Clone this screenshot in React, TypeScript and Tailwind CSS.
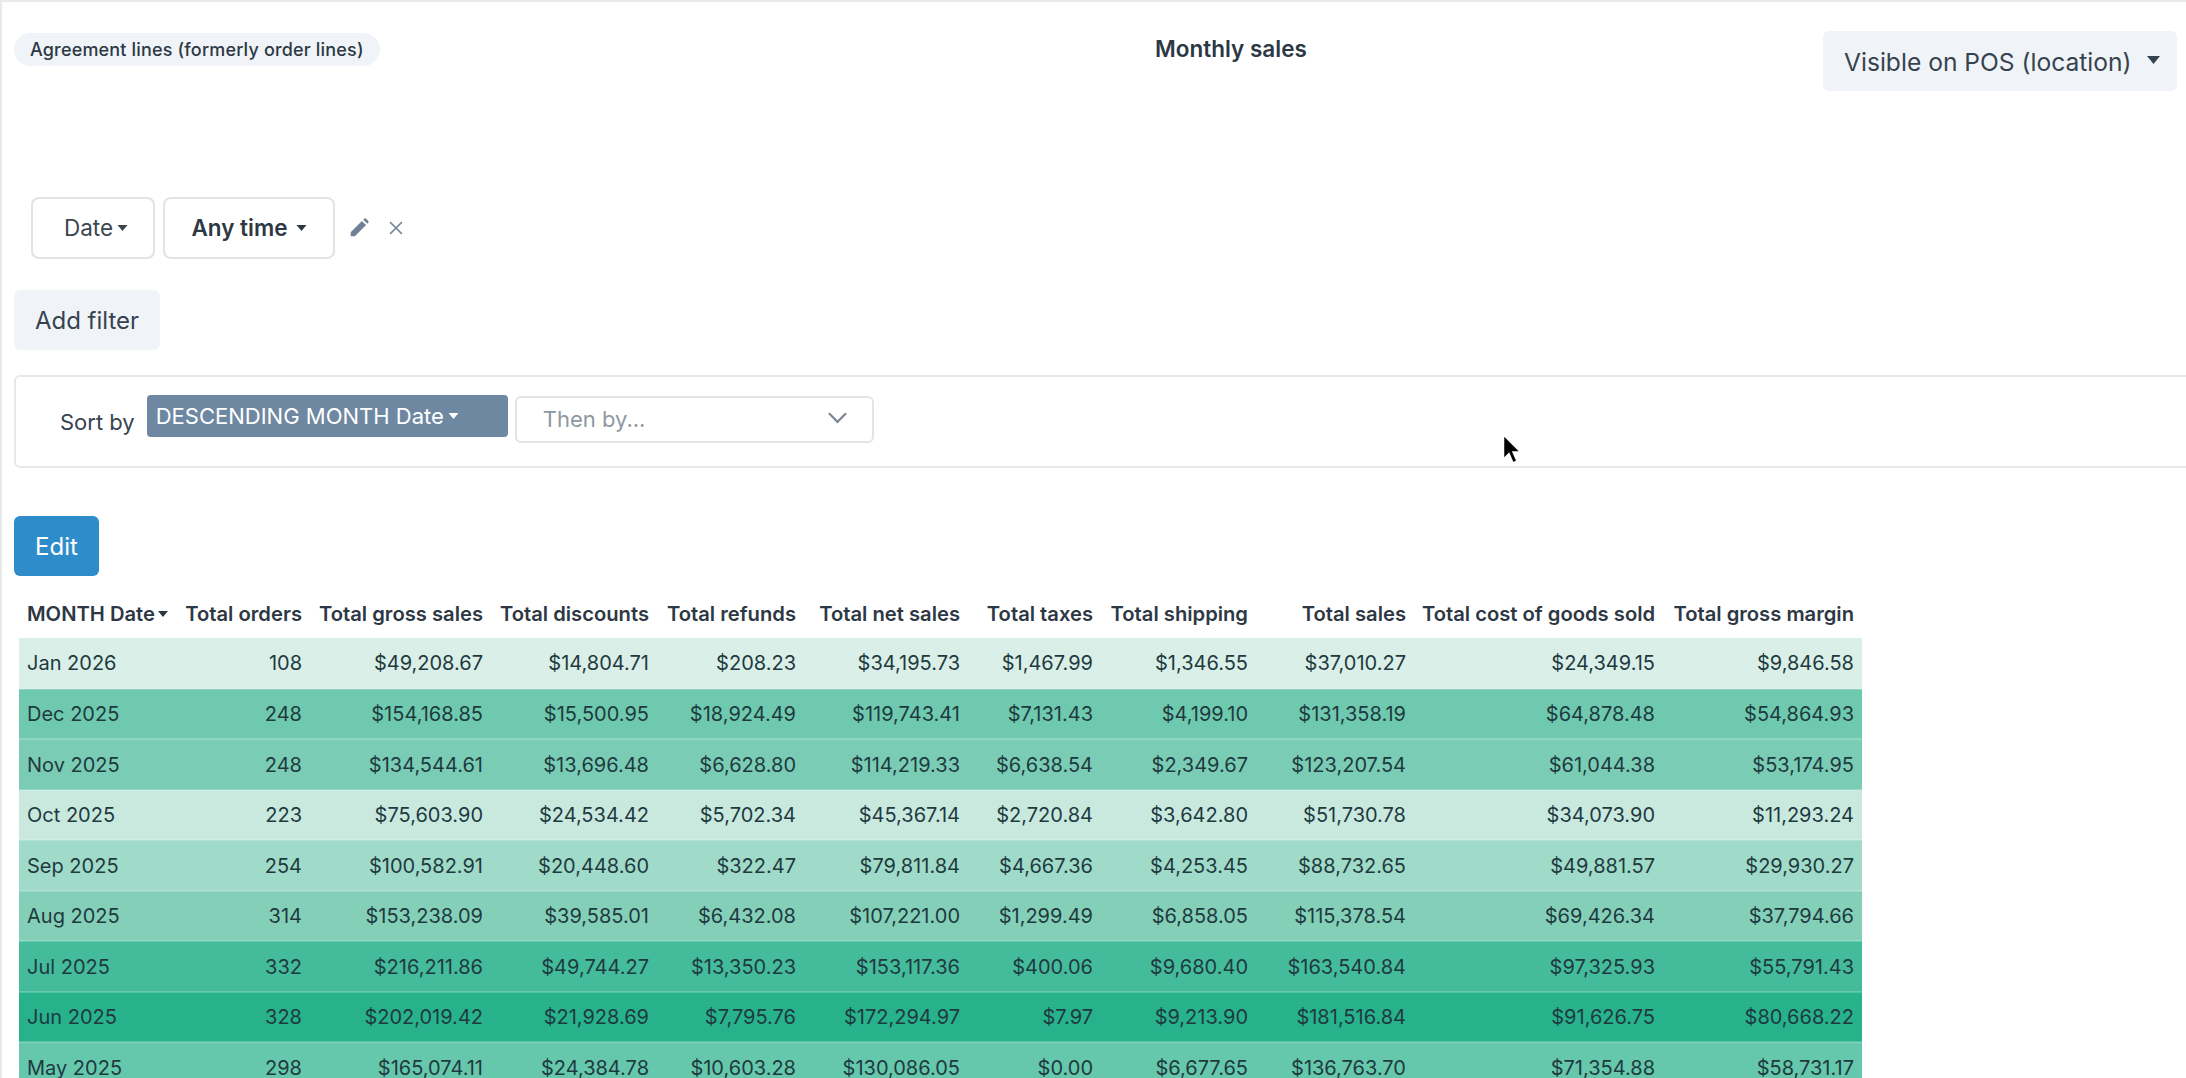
const data: { bg: string; cells: string[] }[] = [
  { bg: "bg-[#d9efe7]", cells: ["Jan 2026", "108", "$49,208.67", "$14,804.71", "$208.23", "$34,195.73", "$1,467.99", "$1,346.55", "$37,010.27", "$24,349.15", "$9,846.58"] },
  { bg: "bg-[#6ec9ae]", cells: ["Dec 2025", "248", "$154,168.85", "$15,500.95", "$18,924.49", "$119,743.41", "$7,131.43", "$4,199.10", "$131,358.19", "$64,878.48", "$54,864.93"] },
  { bg: "bg-[#7acdb4]", cells: ["Nov 2025", "248", "$134,544.61", "$13,696.48", "$6,628.80", "$114,219.33", "$6,638.54", "$2,349.67", "$123,207.54", "$61,044.38", "$53,174.95"] },
  { bg: "bg-[#c9e9df]", cells: ["Oct 2025", "223", "$75,603.90", "$24,534.42", "$5,702.34", "$45,367.14", "$2,720.84", "$3,642.80", "$51,730.78", "$34,073.90", "$11,293.24"] },
  { bg: "bg-[#9fdbc8]", cells: ["Sep 2025", "254", "$100,582.91", "$20,448.60", "$322.47", "$79,811.84", "$4,667.36", "$4,253.45", "$88,732.65", "$49,881.57", "$29,930.27"] },
  { bg: "bg-[#83cfb7]", cells: ["Aug 2025", "314", "$153,238.09", "$39,585.01", "$6,432.08", "$107,221.00", "$1,299.49", "$6,858.05", "$115,378.54", "$69,426.34", "$37,794.66"] },
  { bg: "bg-[#44bb9b]", cells: ["Jul 2025", "332", "$216,211.86", "$49,744.27", "$13,350.23", "$153,117.36", "$400.06", "$9,680.40", "$163,540.84", "$97,325.93", "$55,791.43"] },
  { bg: "bg-[#27b28c]", cells: ["Jun 2025", "328", "$202,019.42", "$21,928.69", "$7,795.76", "$172,294.97", "$7.97", "$9,213.90", "$181,516.84", "$91,626.75", "$80,668.22"] },
  { bg: "bg-[#65c7ab]", cells: ["May 2025", "298", "$165,074.11", "$24,384.78", "$10,603.28", "$130,086.05", "$0.00", "$6,677.65", "$136,763.70", "$71,354.88", "$58,731.17"] },
];
const headers = ["Total orders", "Total gross sales", "Total discounts", "Total refunds", "Total net sales", "Total taxes", "Total shipping", "Total sales", "Total cost of goods sold", "Total gross margin"];
const widths = ["w-[158px]", "w-[133px]", "w-[181px]", "w-[166px]", "w-[147px]", "w-[164px]", "w-[133px]", "w-[155px]", "w-[158px]", "w-[249px]", "w-[199px]"];

function Caret({ className }: { className: string }) {
  return (
    <svg viewBox="0 0 10 6" className={className} fill="currentColor">
      <path d="M0 0h10L5 6z" />
    </svg>
  );
}

export default function App() {
  return (
    <div className="w-[2186px] h-[1078px] overflow-hidden bg-white text-[#2d3844] font-['Inter',sans-serif] border-t-2 border-l-2 border-[#e8eaec] relative">
      <div className="flex h-[93px] items-start">
        <div className="w-[1153px] pl-3 pt-[31px]">
          <span className="inline-flex h-[33px] w-[366px] items-center rounded-full bg-[#f0f4f8] pl-4 text-[18px] font-medium tracking-[0.17px] whitespace-nowrap">
            Agreement lines (formerly order lines)
          </span>
        </div>
        <div className="pt-[30px] text-[22.5px] font-semibold whitespace-nowrap w-[668px]">Monthly sales</div>
        <div className="mt-[29px] flex h-[60px] w-[354px] shrink-0 items-center rounded-md bg-[#f0f4f8] pl-[21px] pt-[2px] text-[24.6px] text-[#36434f] whitespace-nowrap">
          Visible on POS (location)
          <Caret className="ml-[15px] w-[13px] h-[8px] mb-1" />
        </div>
      </div>

      <div className="flex items-center pl-[29px] pt-[102px] h-[163px] relative">
        <div className="flex h-[62px] w-[124px] items-center justify-center rounded-lg border-2 border-[#dfe4e8] pl-[6px] text-[22.5px] text-[#3a4652]">
          Date
          <Caret className="ml-[4px] w-[11px] h-[6px]" />
        </div>
        <div className="ml-2 flex h-[62px] w-[172px] items-center justify-center rounded-lg border-2 border-[#dfe4e8] text-[22.5px] font-semibold">
          Any time
          <Caret className="ml-[8px] w-[11px] h-[6px]" />
        </div>
        <svg viewBox="0 0 24 24" className="ml-[14px] w-[20px] h-[20px] text-[#6f8296]" fill="currentColor">
          <path d="M2 22v-5L15.5 3.5l5 5L7 22zM17 2l1.5-1.2c.6-.5 1.4-.5 2 0l2.7 2.7c.5.6.5 1.4 0 2L22 7z" />
        </svg>
        <svg viewBox="0 0 14 14" className="ml-[20px] w-[14px] h-[14px] text-[#6f8296]" fill="none" stroke="currentColor" strokeWidth="1.6">
          <path d="M1 1l12 12M13 1L1 13" />
        </svg>
      </div>

      <div className="pl-3 pt-[32px]">
        <div className="flex h-[60px] w-[146px] items-center justify-center rounded-md bg-[#f0f4f8] pt-[2px] text-[24px] text-[#36434f]">Add filter</div>
      </div>

      <div className="ml-3 mt-[25px] flex h-[93px] w-[2300px] items-start rounded-md border-2 border-[#e6e8ea] pl-[44px] pt-[18px]">
        <span className="mt-[11px] text-[22px] text-[#36434f]">Sort by</span>
        <div className="ml-[12px] flex h-[42px] w-[361px] items-center rounded bg-[#6e88a2] pl-[9px] text-[22px] text-white whitespace-nowrap">
          DESCENDING MONTH Date
          <Caret className="ml-[4px] w-[11px] h-[6px]" />
        </div>
        <div className="ml-[7px] mt-px flex h-[47px] w-[359px] items-center justify-between rounded-md border-2 border-[#e2e4e7] pl-[26px] pr-[25px] text-[22px] text-[#8f98a1]">
          Then by...
          <svg viewBox="0 0 20 12" className="mb-1 w-[19px] h-[12px] text-[#7b8794]" fill="none" stroke="currentColor" strokeWidth="2.4">
            <path d="M1 1l9 9 9-9" />
          </svg>
        </div>
      </div>

      <div className="ml-3 mt-[48px] flex h-[60px] w-[85px] items-center justify-center rounded-md bg-[#2f8cca] pt-[2px] text-[24px] text-white">Edit</div>

      <table className="ml-[17px] mt-[23px] table-fixed border-collapse w-[1843px] text-[20px] text-[#1f3a3f]">
        <colgroup>
          {widths.map((w, i) => (
            <col key={i} className={w} />
          ))}
        </colgroup>
        <thead>
          <tr className="h-[37px] text-[#2d3844]">
            <th className="px-2 pb-[9px] text-left text-[20.2px] font-semibold whitespace-nowrap">
              <span className="inline-flex items-center">
                MONTH Date
                <Caret className="ml-[3px] w-[10px] h-[6px]" />
              </span>
            </th>
            {headers.map((h) => (
              <th key={h} className="px-2 pb-[9px] text-right text-[20.2px] font-semibold whitespace-nowrap">{h}</th>
            ))}
          </tr>
        </thead>
        <tbody>
          {data.map((r) => (
            <tr key={r.cells[0]} className={`h-[50.5px] border-b-2 border-[#ffffff33] ${r.bg}`}>
              {r.cells.map((c, i) => (
                <td key={i} className={`px-2 whitespace-nowrap ${i === 0 ? "text-left" : "text-right"}`}>{c}</td>
              ))}
            </tr>
          ))}
        </tbody>
      </table>

      <svg viewBox="0 0 20 32" className="absolute left-[1500px] top-[431px] w-[20px] h-[32px]">
        <path d="M1.5 2v24l5.5-5.5 4 9.5 4-2-4-9h7.5z" fill="#000" stroke="#fff" strokeWidth="1.5" />
      </svg>
    </div>
  );
}
